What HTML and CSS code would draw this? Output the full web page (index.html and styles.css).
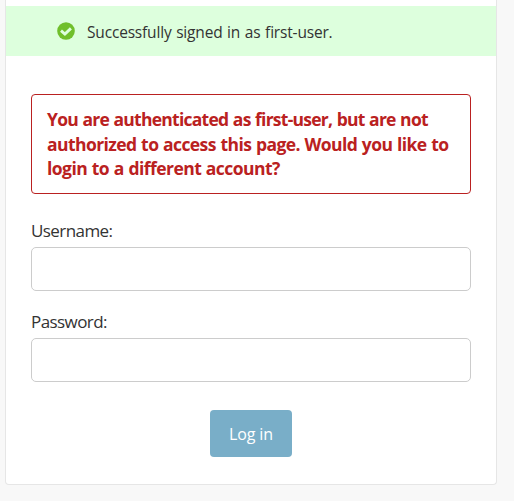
FILE: index.html
```html
<!DOCTYPE html>
<html lang="en">
<head>
<meta charset="utf-8">
<title>Log in</title>
<link rel="stylesheet" href="styles.css">
</head>
<body>
<main class="container">
  <div class="message">
    <svg class="message-icon" viewBox="0 0 18 18" aria-hidden="true"><circle cx="9" cy="9" r="8.8" fill="#70bf2b"/><path d="M4 8.6 7.9 12.1 13.9 6.4" fill="none" stroke="#ddffdd" stroke-width="2.9"/></svg>
    <span class="message-text">Successfully signed in as first-user.</span>
  </div>
  <div class="content">
    <p class="error"><span class="line line-one">You are authenticated as first-user, but are not</span> <span class="line line-two">authorized to access this page. Would you like to</span> <span class="line line-three">login to a different account?</span></p>
    <form>
      <div class="row">
        <label class="label-username" for="username">Username:</label>
        <input id="username" type="text">
      </div>
      <div class="row">
        <label class="label-password" for="password">Password:</label>
        <input id="password" type="password">
      </div>
      <div class="actions"><button type="button">Log in</button></div>
    </form>
  </div>
</main>
</body>
</html>
```
FILE: styles.css
```css
* { box-sizing: border-box; }
body {
  margin: 0;
  height: 501px;
  overflow: hidden;
  background: #f8f8f8;
  color: #333;
  font: 16px/24px "Open Sans", "Noto Sans", sans-serif;
}
.container {
  width: 492px;
  height: 485px;
  margin-left: 5px;
  padding-top: 6px;
  background: #fff;
  border: 1px solid #e6e6e6;
  border-top: 0;
  border-radius: 0 0 4px 4px;
}
.message {
  display: flex;
  align-items: center;
  height: 50px;
  padding: 0 0 0 51px;
  background: #dfd;
}
.message-icon { width: 18px; height: 18px; margin: 0 12px 0 0; }
.message-text { padding-top: 1px; font-size: 15.5px; letter-spacing: -0.18px; word-spacing: 0.8px; white-space: nowrap; }
.content { padding: 38px 25px 0; }
.error {
  height: 100px;
  margin: 0 0 25px;
  padding: 12px 0 0 15px;
  border: 1px solid #ba2121;
  border-radius: 4px;
  color: #ba2121;
  font-size: 17.5px;
  font-weight: 700;
  line-height: 24.5px;
}
.line { display: block; white-space: nowrap; letter-spacing: -0.6px; word-spacing: 0.6px; }
.line-one { letter-spacing: -0.74px; }
.line-two { letter-spacing: -0.57px; }
.line-three { letter-spacing: -0.54px; }
.row { margin-bottom: 19px; }
label { display: block; height: 28px; font-size: 17px; letter-spacing: -0.58px; }
input {
  display: block;
  width: 440px;
  height: 44px;
  border: 1px solid #ccc;
  border-radius: 5px;
  background: #fff;
}
.actions { display: flex; justify-content: center; padding-top: 9px; }
button {
  width: 82px;
  height: 47px;
  padding: 0;
  border: 0;
  border-radius: 4px;
  background: #79aec8;
  color: #fff;
  font: 16px "Open Sans", sans-serif;
  letter-spacing: -0.1px;
}
```
